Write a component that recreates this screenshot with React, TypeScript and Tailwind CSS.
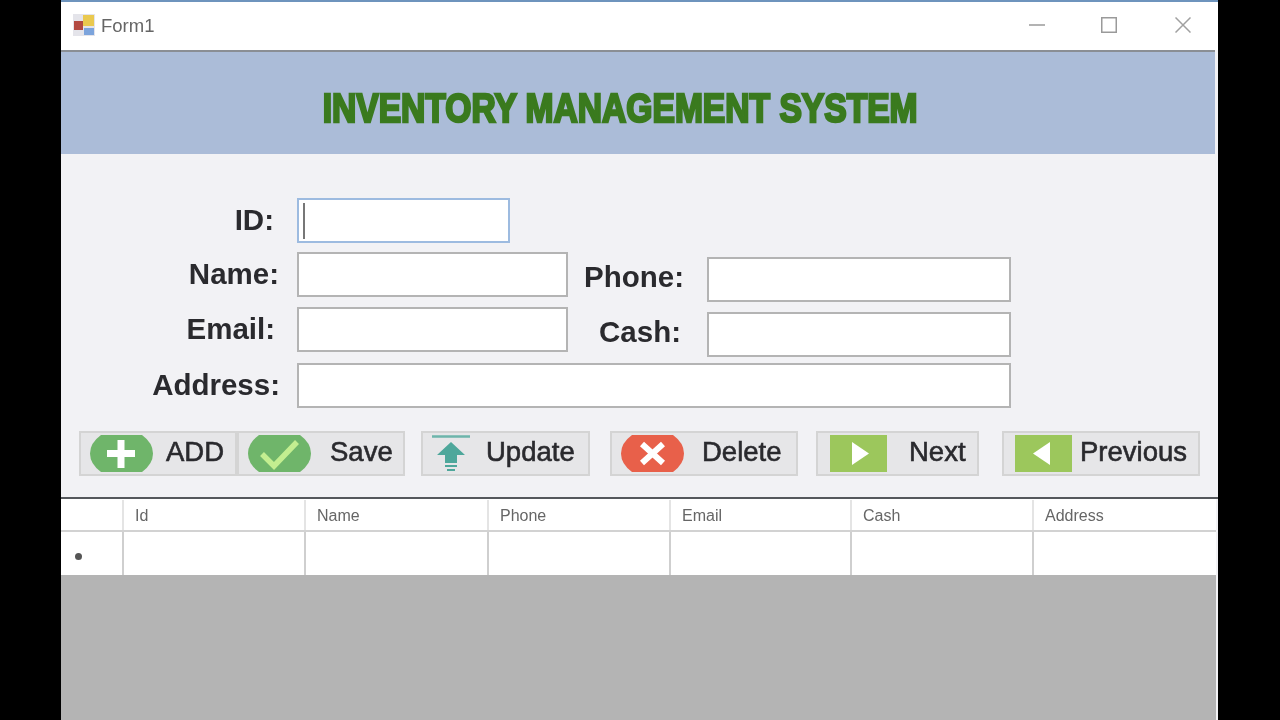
const ui = "font-['Liberation_Sans',Arial,sans-serif]";

function PillIcon({ fill, children }: { fill: string; children: React.ReactNode }) {
  return (
    <svg width="63" height="37" viewBox="0 0 63 37" className="shrink-0">
      <path d="M11 0H52Q63 8 63 18.5Q63 29 52 37H11Q0 29 0 18.5Q0 8 11 0Z" fill={fill} />
      {children}
    </svg>
  );
}

function SquareIcon({ dir }: { dir: 'left' | 'right' }) {
  return (
    <svg width="57" height="37" viewBox="0 0 57 37" className="shrink-0">
      <rect width="57" height="37" fill="#9cc75c" />
      {dir === 'right' ? (
        <path d="M22 7L39 18.5L22 30Z" fill="#fff" />
      ) : (
        <path d="M35 7L18 18.5L35 30Z" fill="#fff" />
      )}
    </svg>
  );
}

function WinButton({ width, gap, icon, iconLeft, textLeft, label }: {
  width: string; gap: string; icon: React.ReactNode; iconLeft: string; textLeft: string; label: string;
}) {
  return (
    <div className={`flex h-[45px] shrink-0 items-center border-2 border-[#d4d4d4] bg-[#e6e6e8] text-[27.5px] text-[#2a2a2e] [-webkit-text-stroke:0.6px_#2a2a2e] ${width} ${gap}`}>
      <div className={iconLeft}>{icon}</div>
      <span className={`mb-[3px] ${textLeft}`}>{label}</span>
    </div>
  );
}

function TextBox({ className }: { className: string }) {
  return <div className={`h-[45px] shrink-0 border-2 border-[#b4b4b4] bg-white ${className}`} />;
}

function Label({ text, className }: { text: string; className: string }) {
  return <div className={`flex h-[45px] shrink-0 items-center justify-end text-[29.5px] font-bold leading-none text-[#2a2a2e] ${className}`}>{text}</div>;
}

export default function App() {
  const columns = ['Id', 'Name', 'Phone', 'Email', 'Cash', 'Address'];
  const gridCols = 'grid grid-cols-[61px_182px_183px_182px_181px_182px_184px]';

  return (
    <div className={`flex h-[720px] w-[1280px] overflow-hidden bg-black ${ui}`}>
      <div className="ml-[61px] flex h-[720px] w-[1157px] flex-col border-t-2 border-t-[#6e94bd] bg-[#f2f2f5] blur-[0.6px]">
        {/* title bar */}
        <div className="flex h-[48px] shrink-0 items-center bg-white pl-[12px] text-[18.5px] text-[#666]">
          <svg width="22" height="22" viewBox="0 0 22 22" className="mr-[6px] mb-[2px]">
            <rect width="22" height="22" fill="#e4e4ea" />
            <rect x="10" y="1" width="11" height="11" fill="#eac94f" />
            <rect x="1" y="7" width="9" height="9" fill="#b34a42" />
            <rect x="11" y="14" width="10" height="7" fill="#7ca4dc" />
          </svg>
          <span>Form1</span>
          <svg width="16" height="16" viewBox="0 0 16 16" className="ml-[875px] mb-[2px]">
            <path d="M0 8H16" stroke="#9a9a9a" strokeWidth="1.5" />
          </svg>
          <svg width="16" height="16" viewBox="0 0 16 16" className="ml-[56px] mb-[2px]">
            <rect x="0.75" y="0.75" width="14.5" height="14.5" fill="none" stroke="#9a9a9a" strokeWidth="1.5" />
          </svg>
          <svg width="16" height="16" viewBox="0 0 16 16" className="ml-[58px] mb-[2px]">
            <path d="M0.5 0.5L15.5 15.5M15.5 0.5L0.5 15.5" stroke="#a0a0a0" strokeWidth="1.5" />
          </svg>
        </div>

        {/* banner */}
        <div className="mr-[3px] flex h-[104px] shrink-0 items-center justify-center border-t-2 border-t-[#8a8e94] bg-[#abbcd8] pt-[9px]">
          <span className="mr-[36px] block origin-center scale-x-[0.84] text-[40px] font-bold leading-none whitespace-nowrap text-[#3a7a1e] [-webkit-text-stroke:2.5px_#3a7a1e]">
            INVENTORY MANAGEMENT SYSTEM
          </span>
        </div>

        {/* form */}
        <div className="flex h-[345px] shrink-0 flex-col border-b-2 border-b-[#55585c] pt-[44px]">
          <div className="flex">
            <Label text="ID:" className="w-[236px] pr-[23px] -mt-[1px]" />
            <div className="flex h-[45px] w-[213px] shrink-0 items-center border-2 border-[#9dbbe0] bg-white pl-[4px]">
              <div className="h-[36px] w-[2px] bg-[#777]" />
            </div>
          </div>
          <div className="mt-[9px] flex h-[50px] items-start">
            <Label text="Name:" className="w-[236px] pr-[18px] -mt-[1px]" />
            <TextBox className="w-[271px]" />
            <div className="mt-[5px] flex">
              <Label text="Phone:" className="w-[139px] pr-[23px] -mt-[3px]" />
              <TextBox className="w-[304px]" />
            </div>
          </div>
          <div className="mt-[5px] flex h-[50px] items-start">
            <Label text="Email:" className="w-[236px] pr-[22px] -mt-[1px]" />
            <TextBox className="w-[271px]" />
            <div className="mt-[5px] flex">
              <Label text="Cash:" className="w-[139px] pr-[26px] -mt-[3px]" />
              <TextBox className="w-[304px]" />
            </div>
          </div>
          <div className="mt-[6px] flex">
            <Label text="Address:" className="w-[236px] pr-[17px] -mt-[1px]" />
            <TextBox className="w-[714px]" />
          </div>

          <div className="mt-[23px] flex pl-[18px]">
            <WinButton width="w-[158px]" gap="" iconLeft="ml-[9px]" textLeft="ml-[13px]" label="ADD" icon={
              <PillIcon fill="#6fb56a"><path d="M31 5V33M17 18.5H45" stroke="#fff" strokeWidth="7" /></PillIcon>
            } />
            <WinButton width="w-[168px]" gap="" iconLeft="ml-[9px]" textLeft="ml-[19px]" label="Save" icon={
              <PillIcon fill="#6fb56a"><path d="M14 19L26 31L49 7" fill="none" stroke="#c3ee90" strokeWidth="5.5" /></PillIcon>
            } />
            <WinButton width="w-[169px]" gap="ml-[16px]" iconLeft="ml-[9px]" textLeft="ml-[16px]" label="Update" icon={
              <svg width="38" height="37" viewBox="0 0 38 37" className="shrink-0">
                <path d="M0 1.5H38" stroke="#6db5ab" strokeWidth="2.5" />
                <path d="M19 7L33 20H25V28H13V20H5Z" fill="#4ea79b" />
                <path d="M13 31H25M15 35H23" stroke="#4ea79b" strokeWidth="2" />
              </svg>
            } />
            <WinButton width="w-[188px]" gap="ml-[20px]" iconLeft="ml-[9px]" textLeft="ml-[18px]" label="Delete" icon={
              <PillIcon fill="#e8604a"><path d="M21 9L42 28M42 9L21 28" stroke="#fff" strokeWidth="6" /></PillIcon>
            } />
            <WinButton width="w-[163px]" gap="ml-[18px]" iconLeft="ml-[12px]" textLeft="ml-[22px]" label="Next" icon={<SquareIcon dir="right" />} />
            <WinButton width="w-[198px]" gap="ml-[23px]" iconLeft="ml-[11px]" textLeft="ml-[8px]" label="Previous" icon={<SquareIcon dir="left" />} />
          </div>
        </div>

        {/* data grid */}
        <div className="mr-[2px] shrink-0 border-t border-t-white bg-white">
          <div className={`${gridCols} h-[32px] border-b-2 border-b-[#d2d2d2] text-[16px] text-[#666]`}>
            <div />
            {columns.map((c) => (
              <div key={c} className="flex items-center border-l-2 border-l-[#e4e4e4] pl-[11px] pt-[2px]">{c}</div>
            ))}
          </div>
          <div className={`${gridCols} h-[43px]`}>
            <div className="flex items-center pl-[14px] pt-[5px]">
              <div className="size-[7px] rounded-full bg-[#555]" />
            </div>
            {columns.map((c) => (
              <div key={c} className="border-l-2 border-l-[#cfcfcf]" />
            ))}
          </div>
        </div>
        <div className="mr-[2px] flex-1 bg-[#b4b4b4]" />
      </div>
    </div>
  );
}
